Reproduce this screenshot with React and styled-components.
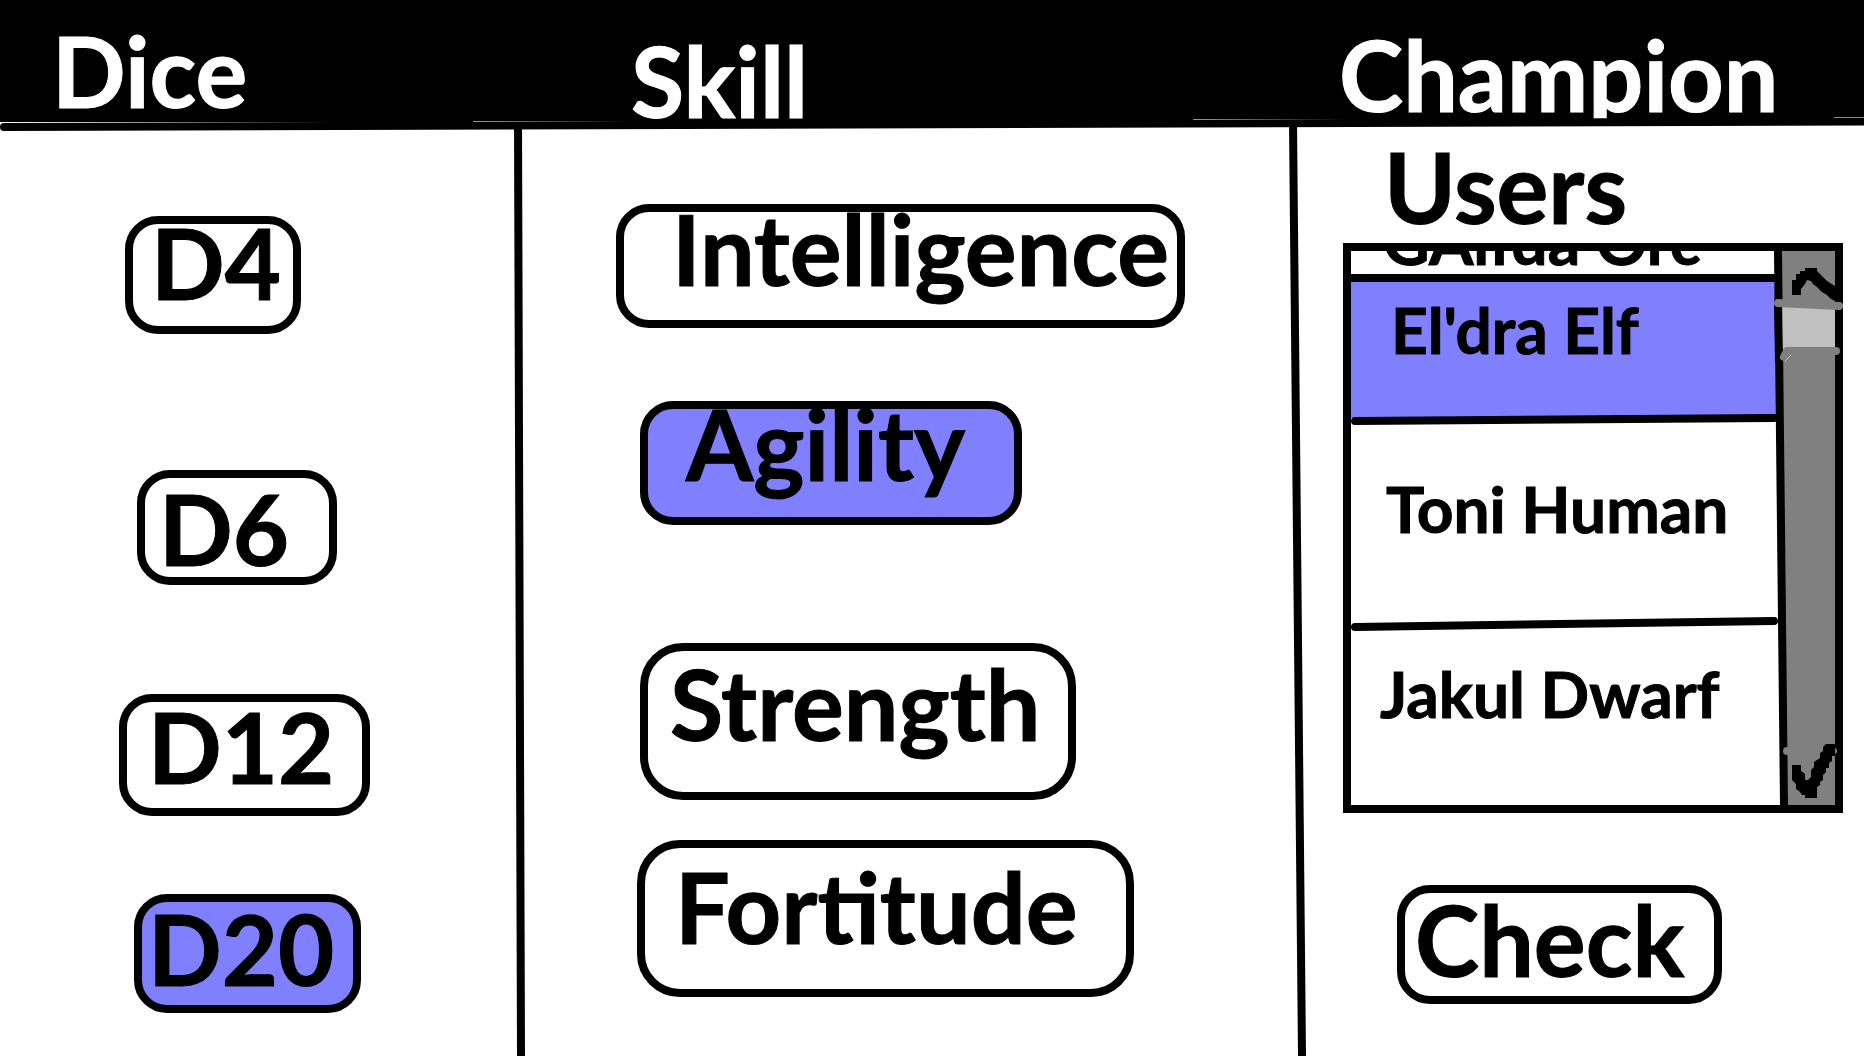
import React, { useState } from "react";
import styled, { createGlobalStyle } from "styled-components";

const ink = "#000000";
const selected = "#8080ff";
const grey = "#808080";

const GlobalStyle = createGlobalStyle`
  * { box-sizing: border-box; }
  body { margin: 0; background: #ffffff; color: ${ink}; font-family: Lato, Carlito, sans-serif; }
  button { font-family: inherit; color: inherit; }
`;

const Page = styled.div`
  position: relative;
  min-height: 100vh;
  display: flex;
  flex-direction: column;
`;

const columns = "minmax(0, 514fr) 11px minmax(0, 764fr) 17px minmax(0, 558fr)";

const Header = styled.header`
  display: grid;
  grid-template-columns: ${columns};
  height: 122px;
  overflow: hidden;
  background: ${ink};
  color: #ffffff;
`;

const Title = styled.h2`
  grid-column: ${(p) => p.$column};
  margin: 0;
  padding: ${(p) => p.$top}px 0 0 ${(p) => p.$indent}px;
  font-size: 97px;
  font-weight: 700;
  line-height: 70px;
  white-space: nowrap;
  -webkit-text-stroke: 1px currentColor;
`;

const Rule = styled.svg`
  position: absolute;
  top: 112px;
  left: 0;
  width: 100%;
  height: 24px;
  pointer-events: none;
`;

const Board = styled.main`
  flex: 1;
  display: grid;
  grid-template-columns: ${columns};
`;

const Column = styled.section`
  display: flex;
  flex-direction: column;
  align-items: flex-start;
  padding-top: ${(p) => p.$top}px;
  padding-bottom: 40px;
`;

const ColumnLine = styled.svg`
  width: 100%;
  height: 100%;
  min-height: 100%;
`;

const Choice = styled.button`
  display: flex;
  align-items: flex-start;
  width: ${(p) => p.$width}px;
  height: ${(p) => p.$height}px;
  margin: ${(p) => p.$gap}px 0 0 ${(p) => p.$indent}px;
  padding: ${(p) => p.$padTop}px 0 0 ${(p) => p.$padLeft}px;
  border: 8px solid ${ink};
  border-radius: ${(p) => (p.$height > 140 ? 43 : 33)}px;
  background: ${(p) => (p["aria-pressed"] ? selected : "#ffffff")};
  font-size: 97px;
  font-weight: 700;
  line-height: 70px;
  white-space: nowrap;
  -webkit-text-stroke: 1px currentColor;
  cursor: pointer;
`;

const Subtitle = styled.h3`
  margin: 0 0 21px 78px;
  font-size: 97px;
  font-weight: 700;
  line-height: 70px;
  -webkit-text-stroke: 1px currentColor;
`;

const ListFrame = styled.div`
  align-self: stretch;
  display: flex;
  height: 570px;
  margin: 0 21px 0 37px;
  border: 8px solid ${ink};
`;

const List = styled.ul`
  flex: 1;
  min-width: 0;
  display: flex;
  flex-direction: column;
  margin: 0;
  padding: 0;
  list-style: none;
  overflow: hidden;
`;

const Item = styled.li`
  position: relative;
  flex: ${(p) => (p.$height ? `0 0 ${p.$height}px` : "1")};
  display: flex;
  min-height: 0;
`;

const ItemButton = styled.button`
  flex: 1;
  display: flex;
  align-items: ${(p) => (p.$clipped ? "flex-end" : "flex-start")};
  overflow: hidden;
  padding: ${(p) => (p.$clipped ? "0 0 9px" : `${p.$top}px 0 0`)} ${(p) => p.$indent}px;
  border: 0;
  border-bottom: ${(p) => (p.$clipped ? `8px solid ${ink}` : "0")};
  background: ${(p) => (p["aria-pressed"] ? selected : "#ffffff")};
  font-size: 64px;
  font-weight: 700;
  line-height: 48px;
  white-space: nowrap;
  -webkit-text-stroke: 1px currentColor;
  cursor: pointer;
`;

const ItemLine = styled.svg`
  position: absolute;
  z-index: 1;
  left: 0;
  bottom: -8px;
  width: 100%;
  height: 16px;
  pointer-events: none;
`;

const Rail = styled.div`
  position: relative;
  z-index: 2;
  flex: 0 0 61px;
  display: flex;
  flex-direction: column;
  margin-left: -6px;
  padding-left: 8px;
`;

const RailEdge = styled.svg`
  position: absolute;
  top: 0;
  left: 0;
  width: 14px;
  height: 100%;
  pointer-events: none;
`;

const RailButton = styled.button`
  flex: 0 0 55px;
  padding: 0;
  border: 0;
  background: ${grey};
  cursor: pointer;

  svg { position: relative; z-index: 1; display: block; overflow: visible; }
`;

const Thumb = styled.div`
  position: relative;
  z-index: 1;
  flex: 0 0 43px;
  background: #c0c0c0;

  svg { position: absolute; top: 0; left: 0; overflow: visible; }
`;

const Track = styled.div`
  flex: 1;
  background: ${grey};
`;

const dice = [
  { label: "D4", width: 176, height: 118, gap: 0, indent: 125, padTop: 4, padLeft: 18 },
  { label: "D6", width: 200, height: 115, gap: 136, indent: 137, padTop: 16, padLeft: 14 },
  { label: "D12", width: 251, height: 122, gap: 109, indent: 119, padTop: 10, padLeft: 21 },
  { label: "D20", width: 227, height: 119, gap: 78, indent: 134, padTop: 12, padLeft: 6 },
];

const skills = [
  { label: "Intelligence", width: 569, height: 124, gap: 0, indent: 91, padTop: 2, padLeft: 48 },
  { label: "Agility", width: 382, height: 124, gap: 73, indent: 115, padTop: 0, padLeft: 38 },
  { label: "Strength", width: 436, height: 157, gap: 118, indent: 115, padTop: 18, padLeft: 22 },
  { label: "Fortitude", width: 497, height: 157, gap: 40, indent: 112, padTop: 24, padLeft: 30 },
];

const users = [
  { name: "GAlfda Orc", height: 31, indent: 32, clipped: true },
  { name: "El'dra Elf", height: 136, top: 24, indent: 40, line: [11, 8] },
  { name: "Toni Human", height: 206, top: 67, indent: 35, line: [11, 5] },
  { name: "Jakul Dwarf", top: 46, indent: 29 },
];

function Choices({ items, value, onChange }) {
  return items.map((c) => (
    <Choice
      key={c.label}
      type="button"
      aria-pressed={c.label === value}
      onClick={() => onChange(c.label)}
      $width={c.width}
      $height={c.height}
      $gap={c.gap}
      $indent={c.indent}
      $padTop={c.padTop}
      $padLeft={c.padLeft}
    >
      {c.label}
    </Choice>
  ));
}

export default function App() {
  const [die, setDie] = useState("D20");
  const [skill, setSkill] = useState("Agility");
  const [user, setUser] = useState("El'dra Elf");

  return (
    <Page>
      <GlobalStyle />
      <Header>
        <Title $column={1} $top={36} $indent={52}>Dice</Title>
        <Title $column={3} $top={46} $indent={106}>Skill</Title>
        <Title $column={5} $top={40} $indent={33}>Champion</Title>
      </Header>
      <Rule viewBox="0 0 1864 24" preserveAspectRatio="none" aria-hidden="true">
        <defs>
          <linearGradient id="fade">
            <stop offset="0" stopColor="#fff" />
            <stop offset="1" stopColor="#000" />
          </linearGradient>
          <linearGradient id="fadeSoft">
            <stop offset="0" stopColor="#999" />
            <stop offset="1" stopColor="#000" />
          </linearGradient>
        </defs>
        <line x1="4" y1="15" x2="1868" y2="9.5" stroke={ink} strokeWidth="8" strokeLinecap="round" />
        <rect x="2" y="10" width="333" height="1" fill="url(#fade)" />
        <rect x="473" y="9" width="157" height="1" fill="url(#fadeSoft)" />
        <rect x="1193" y="7" width="157" height="1" fill="url(#fadeSoft)" />
        <rect x="1834" y="5" width="30" height="1" fill="#888" />
      </Rule>
      <Board>
        <Column $top={94}>
          <Choices items={dice} value={die} onChange={setDie} />
        </Column>
        <ColumnLine viewBox="0 0 11 934" preserveAspectRatio="none" aria-hidden="true">
          <polygon points="0,0 8,0 11,934 3,934" fill={ink} />
        </ColumnLine>
        <Column $top={82}>
          <Choices items={skills} value={skill} onChange={setSkill} />
        </Column>
        <ColumnLine viewBox="0 0 17 934" preserveAspectRatio="none" aria-hidden="true">
          <polygon points="0,0 8,0 17,934 9,934" fill={ink} />
        </ColumnLine>
        <Column $top={30}>
          <Subtitle>Users</Subtitle>
          <ListFrame>
            <List>
              {users.map((u) => (
                <Item key={u.name} $height={u.height}>
                  <ItemButton
                    type="button"
                    aria-pressed={u.name === user}
                    onClick={() => setUser(u.name)}
                    $top={u.top}
                    $indent={u.indent}
                    $clipped={u.clipped}
                  >
                    {u.name}
                  </ItemButton>
                  {u.line && (
                    <ItemLine viewBox="0 0 429 16" preserveAspectRatio="none" aria-hidden="true">
                      <line x1="4" y1={u.line[0]} x2="423" y2={u.line[1]} stroke={ink} strokeWidth="8" strokeLinecap="round" />
                    </ItemLine>
                  )}
                </Item>
              ))}
            </List>
            <Rail>
              <RailButton type="button" aria-label="Scroll up">
                <svg width="53" height="55" viewBox="1782 251 53 55">
                  <polygon
                    transform="translate(1740 230)"
                    fill={ink}
                    points="52,65 52,50 56,50 56,44 60,44 60,41 65,41 65,38 77,38 77,41 81,45 86,50 90,53 95,56 103,56 103,71 95,71 91,69 87,65 82,62 77,57 73,54 71,51 67,50 65,54 61,59 61,65"
                  />
                </svg>
              </RailButton>
              <Thumb>
                <svg width="53" height="43" viewBox="1782 306 53 43" fill="none" aria-hidden="true">
                  <polygon points="1774,300 1782,300 1783,362 1775,362" fill={ink} />
                  <line x1="1778" y1="303" x2="1839" y2="306" stroke={grey} strokeWidth="8" strokeLinecap="round" />
                  <path d="M1784 357L1787 351H1836" stroke={grey} strokeWidth="8" strokeLinecap="round" strokeLinejoin="round" />
                  <path d="M1785 361L1791 355" stroke="#c0c0c0" strokeWidth="1" />
                </svg>
              </Thumb>
              <Track />
              <RailButton type="button" aria-label="Scroll down">
                <svg width="53" height="55" viewBox="1782 750 53 55">
                  <circle cx="1787" cy="751" r="4" fill={grey} />
                  <circle cx="1834" cy="751" r="3" fill={grey} />
                  <polygon
                    transform="translate(1740 720)"
                    fill={ink}
                    points="52,45 61,45 61,51 65,54 65,60 68,60 71,57 71,50 74,47 74,42 80,38 80,33 83,31 83,27 86,24 95,24 95,36 92,36 92,41 89,43 89,48 86,48 86,52 83,55 83,60 80,62 80,65 77,67 77,78 65,78 65,75 62,75 59,71 56,69 56,64 52,60"
                  />
                </svg>
              </RailButton>
              <RailEdge viewBox="0 0 14 554" preserveAspectRatio="none" aria-hidden="true">
                <polygon points="0,0 8,0 14,554 6,554" fill={ink} />
              </RailEdge>
            </Rail>
          </ListFrame>
          <Choice
            type="button"
            $width={325}
            $height={119}
            $gap={72}
            $indent={91}
            $padTop={12}
            $padLeft={10}
          >
            Check
          </Choice>
        </Column>
      </Board>
    </Page>
  );
}
